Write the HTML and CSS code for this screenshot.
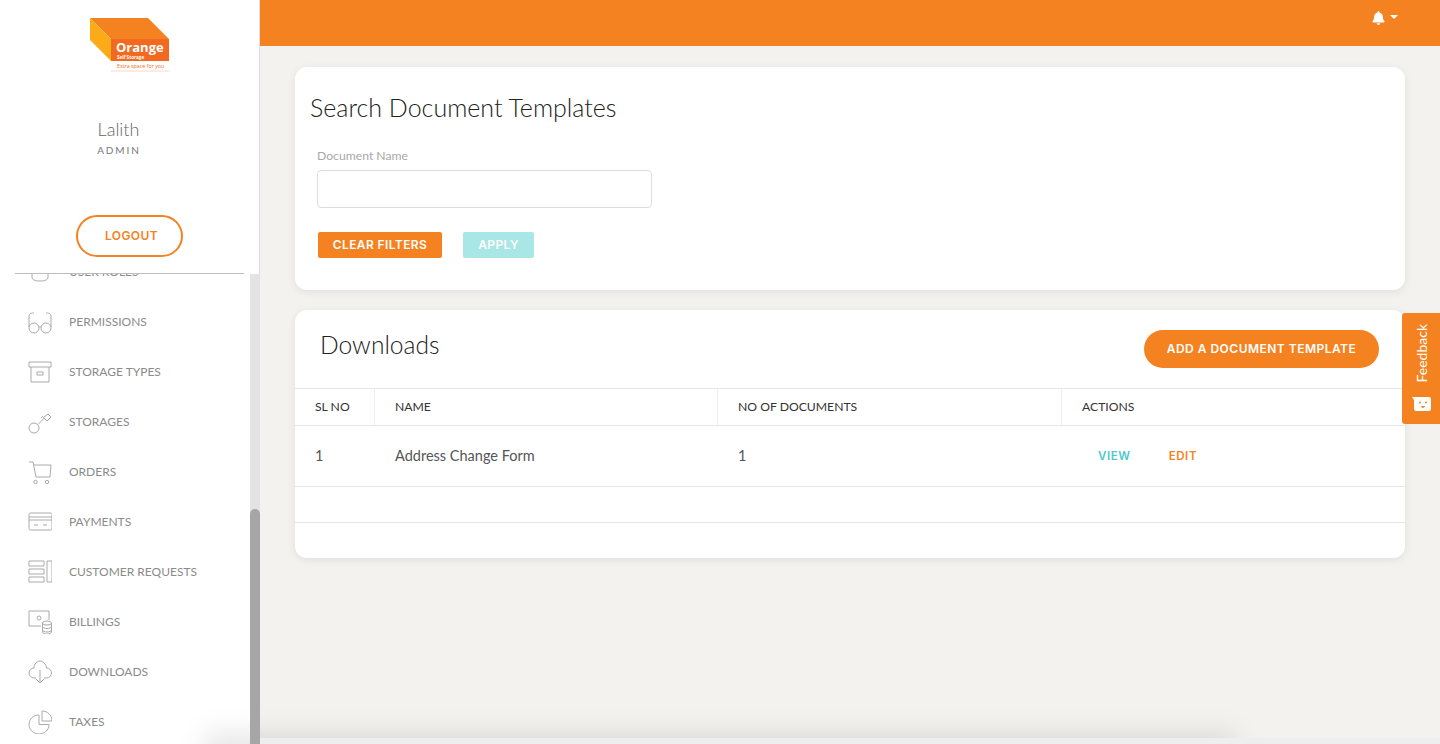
FILE: index.html
```html
<!DOCTYPE html>
<html lang="en">
<head>
<meta charset="utf-8">
<title>Search Document Templates</title>
<link rel="stylesheet" href="styles.css">
</head>
<body>
<div class="app">
  <aside class="sidebar">
    <div class="profile">
      <svg class="logo" width="80" height="54" viewBox="0 0 80 54" role="img" aria-label="Orange Self Storage">
        <polygon points="0,0 58,0 79,21 21,21" fill="#f58220"/>
        <polygon points="0,0 21,21 21,43 0,22" fill="#fbab18"/>
        <rect x="21" y="21" width="58" height="22" fill="#f26a21"/>
        <text x="26" y="33.500" class="logo-name">Orange</text>
        <text x="27" y="40.500" class="logo-sub">Self Storage</text>
        <text x="27" y="50" class="logo-tag">Extra space for you</text>
        <line x1="21" y1="53" x2="79" y2="53" stroke="#fbd8c4" stroke-width="1"/>
      </svg>
      <div class="user-name">Lalith</div>
      <div class="user-role">ADMIN</div>
      <a class="logout">LOGOUT</a>
    </div>
    <div class="nav-wrap">
      <nav class="nav">
        <a class="nav-item"><svg class="ico" viewBox="0 0 24 24"><path d="M4 2v15c0 3 3 4 8 4s8-1 8-4V2M20 8h3"/></svg><span>USER ROLES</span></a>
        <a class="nav-item"><svg class="ico" viewBox="0 0 24 24"><path d="M6 3H4.500C3 3 1 4 1 6v11M18 3h1.500C21 3 23 4 23 6v11"/><circle cx="6" cy="18" r="5"/><circle cx="18" cy="18" r="5"/><path d="M11 17.500c1-1 1-1 2 0"/></svg><span>PERMISSIONS</span></a>
        <a class="nav-item"><svg class="ico" viewBox="0 0 24 24"><path d="M1 2h22v5H1zM3 7v15h18V7M9 12h6v3H9z"/></svg><span>STORAGE TYPES</span></a>
        <a class="nav-item"><svg class="ico" viewBox="0 0 24 24"><circle cx="6" cy="18" r="5"/><path d="M10 14.500l6-6M15 8l5-4 3 3-4 4-3-3zM13 8l2-2"/></svg><span>STORAGES</span></a>
        <a class="nav-item"><svg class="ico" viewBox="0 0 24 24"><path d="M1 2h4l3 15h14l1-12H6"/><circle cx="7.500" cy="22" r="1.700"/><circle cx="19" cy="22" r="1.700"/></svg><span>ORDERS</span></a>
        <a class="nav-item"><svg class="ico" viewBox="0 0 24 24"><rect x="1" y="3" width="23" height="17" rx="1.500"/><path d="M1 7h23M1 10h23M6 15h4M15 15h4"/></svg><span>PAYMENTS</span></a>
        <a class="nav-item"><svg class="ico" viewBox="0 0 24 24"><path d="M1 1h15v5H1zM1 9h15v5H1zM1 17h15v5H1zM19 1h5v21h-5z"/></svg><span>CUSTOMER REQUESTS</span></a>
        <a class="nav-item"><svg class="ico" viewBox="0 0 24 24"><path d="M13 16H1V1h20v9"/><circle cx="11" cy="8" r="2"/><ellipse cx="19" cy="13" rx="4.500" ry="2"/><path d="M14.500 13v9c0 1 2 2 4.500 2s4.500-1 4.500-2v-9M14.500 16.500c0 1 2 2 4.500 2s4.500-1 4.500-2M14.500 20c0 1 2 2 4.500 2s4.500-1 4.500-2"/></svg><span>BILLINGS</span></a>
        <a class="nav-item"><svg class="ico" viewBox="0 0 24 24"><path d="M8 18H6c-3 0-5-2.500-5-5s2-5 5-5c0-4 3-7 6-7s6 3 6.500 7c3 0 5 2.500 5 5s-2 5-5 5H16M12 10v13M8 19l4 4 4-4"/></svg><span>DOWNLOADS</span></a>
        <a class="nav-item"><svg class="ico" viewBox="0 0 24 24"><path d="M11 5C5 5 1 9.500 1 14.500S5.500 24 11 24s10-4 10-9.500H11z"/><path d="M14 1v10h10C24 5 19.500 1 14 1z"/></svg><span>TAXES</span></a>
      </nav>
      <div class="scrollbar"><div class="scroll-thumb"></div></div>
    </div>
  </aside>

  <div class="main">
    <header class="topbar">
      <svg class="bell" viewBox="0 0 448 512"><path fill="#fff" d="M224 512c35.320 0 63.970-28.650 63.970-64H160.030c0 35.350 28.650 64 63.970 64zm215.390-149.710c-19.320-20.760-55.470-51.990-55.470-154.290 0-77.700-54.480-139.900-127.940-155.160V32c0-17.670-14.320-32-31.980-32s-31.980 14.330-31.980 32v20.840C118.560 68.100 64.080 130.300 64.080 208c0 102.300-36.150 133.530-55.470 154.290-6 6.450-8.660 14.160-8.610 21.710.11 16.400 12.980 32 32.100 32h383.800c19.120 0 32-15.600 32.100-32 .05-7.550-2.610-15.270-8.610-21.710z"/></svg>
      <span class="caret"></span>
    </header>
    <main class="content">
      <section class="card search-card">
        <h1 class="search-title">Search Document Templates</h1>
        <label class="field-label" for="doc-name">Document Name</label>
        <input class="field-input" id="doc-name" type="text">
        <div class="btn-row">
          <button class="btn btn-clear">CLEAR FILTERS</button>
          <button class="btn btn-apply">APPLY</button>
        </div>
      </section>
      <section class="card list-card">
        <div class="list-head">
          <h2 class="list-title">Downloads</h2>
          <button class="btn-add">ADD A DOCUMENT TEMPLATE</button>
        </div>
        <table class="table">
          <colgroup><col class="c1"><col class="c2"><col class="c3"><col class="c4"></colgroup>
          <thead>
            <tr><th>SL NO</th><th>NAME</th><th>NO OF DOCUMENTS</th><th>ACTIONS</th></tr>
          </thead>
          <tbody>
            <tr class="row-data"><td>1</td><td>Address Change Form</td><td>1</td><td class="actions"><a class="act-view">VIEW</a><a class="act-edit">EDIT</a></td></tr>
            <tr class="row-empty"><td></td><td></td><td></td><td></td></tr>
            <tr class="row-last"><td></td><td></td><td></td><td></td></tr>
          </tbody>
        </table>
      </section>
    </main>
    <div class="footer-strip"></div>
  </div>
</div>
<div class="bottom-shadow"></div>
<aside class="feedback">
  <span class="feedback-text">Feedback</span>
  <svg class="feedback-ico" width="19" height="14" viewBox="0 0 19 14"><path fill="#fff" d="M0 0h17a2 2 0 0 1 2 2v10a2 2 0 0 1-2 2H4a2 2 0 0 1-2-2V3z"/><circle cx="8" cy="5.500" r="1" fill="#f58220"/><circle cx="14" cy="5.500" r="1" fill="#f58220"/><path fill="#f58220" d="M9 9h4c0 1.200-1 1.800-2 1.800S9 10.200 9 9z"/></svg>
</aside>
</body>
</html>
```
FILE: styles.css
```css
* { box-sizing: border-box; }
html, body { margin: 0; height: 100%; overflow: hidden; }
body { font-family: "Lato", "Open Sans", sans-serif; color: #333; background: #f3f2ee; }
.app { display: flex; height: 744px; }

.sidebar { width: 260px; flex: none; display: flex; flex-direction: column; background: #fff; border-right: 1px solid #ddd; }
.profile { height: 274px; flex: none; display: flex; flex-direction: column; align-items: center; padding-top: 18px; margin: 0 15px 0 15px; border-bottom: 1px solid #bdbdbd; background: #fff; position: relative; z-index: 1; }
.logo { display: block; }
.logo-name { font: 700 13px "Open Sans", sans-serif; fill: #fff; }
.logo-sub { font: 700 4.600px "Open Sans", sans-serif; fill: #fff; }
.logo-tag { font: 400 5.300px "Open Sans", sans-serif; fill: #f26a21; }
.user-name { margin-top: 45px; margin-left: -22px; font-size: 18px; font-weight: 300; line-height: 24px; color: #666; }
.user-role { margin-top: 3px; margin-left: -21px; font-size: 10px; letter-spacing: 1.900px; line-height: 12px; color: #777; }
.logout { margin-top: 59px; margin-left: -1px; width: 107px; height: 42px; display: flex; align-items: center; justify-content: center; padding: 0 0 2px 5px; border: 2px solid #f58220; border-radius: 21px; color: #f58220; font: 600 12px "Inter", sans-serif; letter-spacing: .4px; }

.nav-wrap { flex: 1; min-height: 0; display: flex; overflow: hidden; margin-right: -1px; }
.nav { flex: 1; margin-top: -27px; padding-left: 28px; }
.nav-item { display: flex; align-items: center; height: 50px; gap: 17px; font-size: 12px; color: #8b8b8b; }
.nav-item span { padding-bottom: 2px; }
.ico { width: 24px; height: 24px; flex: none; fill: none; stroke: #aaa; stroke-width: 1; }
.scrollbar { width: 10px; flex: none; background: #e3e3e3; display: flex; flex-direction: column; justify-content: flex-end; position: relative; z-index: 3; }
.scroll-thumb { height: 235px; background: #a6a6a6; border-radius: 5px 5px 0 0; }

.main { flex: 1; min-width: 0; display: flex; flex-direction: column; }
.topbar { height: 46px; flex: none; background: #f58220; display: flex; align-items: flex-start; justify-content: flex-end; padding: 11px 42px 0 0; gap: 5px; }
.bell { width: 13px; height: 14px; display: block; }
.caret { margin-top: 4px; width: 0; height: 0; border-left: 4px solid transparent; border-right: 4px solid transparent; border-top: 4px solid #fff; }
.content { flex: 1; min-height: 0; padding: 21px 35px 0; display: flex; flex-direction: column; gap: 20px; }
.footer-strip { height: 6px; flex: none; background: #eeeeef; position: relative; z-index: 2; }

.card { background: #fff; border-radius: 12px; box-shadow: 0 2px 8px rgba(0,0,0,.08); }
.search-card { height: 223px; padding: 23px 15px 0; display: flex; flex-direction: column; align-items: flex-start; }
.search-title { margin: 0; font-size: 25px; font-weight: 300; line-height: 34px; color: #222; }
.field-label { margin: 24px 0 0 7px; font-size: 12.200px; line-height: 16px; color: #a8a8a8; }
.field-input { margin: 6px 0 0 7px; width: 335px; height: 38px; border: 1px solid #ddd; border-radius: 4px; background: #fff; display: block; }
.btn-row { display: flex; gap: 21px; margin: 24px 0 0 8px; }
.btn { height: 26px; border: 0; border-radius: 2px; color: #fff; font: 600 12px "Inter", sans-serif; padding: 0 0 2px; letter-spacing: .4px; }
.btn-clear { width: 124px; background: #f58220; }
.btn-apply { width: 71px; background: #a9e6e6; }

.list-card { height: 248px; overflow: hidden; }
.list-head { height: 78px; display: flex; justify-content: space-between; align-items: flex-start; padding: 19px 26px 0 25px; }
.list-title { margin: 0; font-size: 24.600px; font-weight: 300; line-height: 32px; color: #222; }
.btn-add { width: 235px; height: 38px; margin-top: 1px; border: 0; border-radius: 19px; background: #f58220; color: #fff; font: 600 12px "Inter", sans-serif; padding: 0 0 2px; letter-spacing: .48px; }
.table { width: 100%; border-collapse: collapse; table-layout: fixed; }
.c1 { width: 79px; } .c2 { width: 343px; } .c3 { width: 344px; }
.table th { height: 37px; padding: 0 20px 2px 20.500px; text-align: left; font-size: 12.200px; font-weight: 400; color: #333; border-top: 1px solid #e6e6e6; border-bottom: 1px solid #e6e6e6; border-left: 1px solid #eee; }
.table th:first-child, .table td:first-child { border-left: 0; padding-left: 20px; }
.table td { padding: 0 20px 1px 21px; font-size: 14.500px; color: #555; border-bottom: 1px solid #e6e6e6; }
.row-data td { height: 61px; }
.row-empty td { height: 36px; }
.row-last td { height: 36px; border-bottom: 0; }
.table .actions { padding-left: 37px; padding-bottom: 4px; }
.act-view, .act-edit { font: 600 11.500px "Inter", sans-serif; letter-spacing: .6px; }
.act-view { color: #4fc9c9; margin-right: 38px; }
.act-edit { color: #f58220; }

.bottom-shadow { position: fixed; left: 205px; right: 205px; bottom: -30px; height: 42px; background: rgba(0,0,0,.09); filter: blur(12px); z-index: 1; }
.feedback { position: fixed; right: 0; top: 313px; width: 38px; height: 111px; background: #f58220; border-radius: 3px 0 0 3px; display: flex; flex-direction: column; align-items: center; padding-top: 11px; gap: 14px; z-index: 3; }
.feedback-text { writing-mode: vertical-rl; transform: rotate(180deg); font: 400 14px "Lato", sans-serif; color: #fff; line-height: 1; margin-left: 1px; }
.feedback-ico { display: block; margin-left: 1px; }
```
